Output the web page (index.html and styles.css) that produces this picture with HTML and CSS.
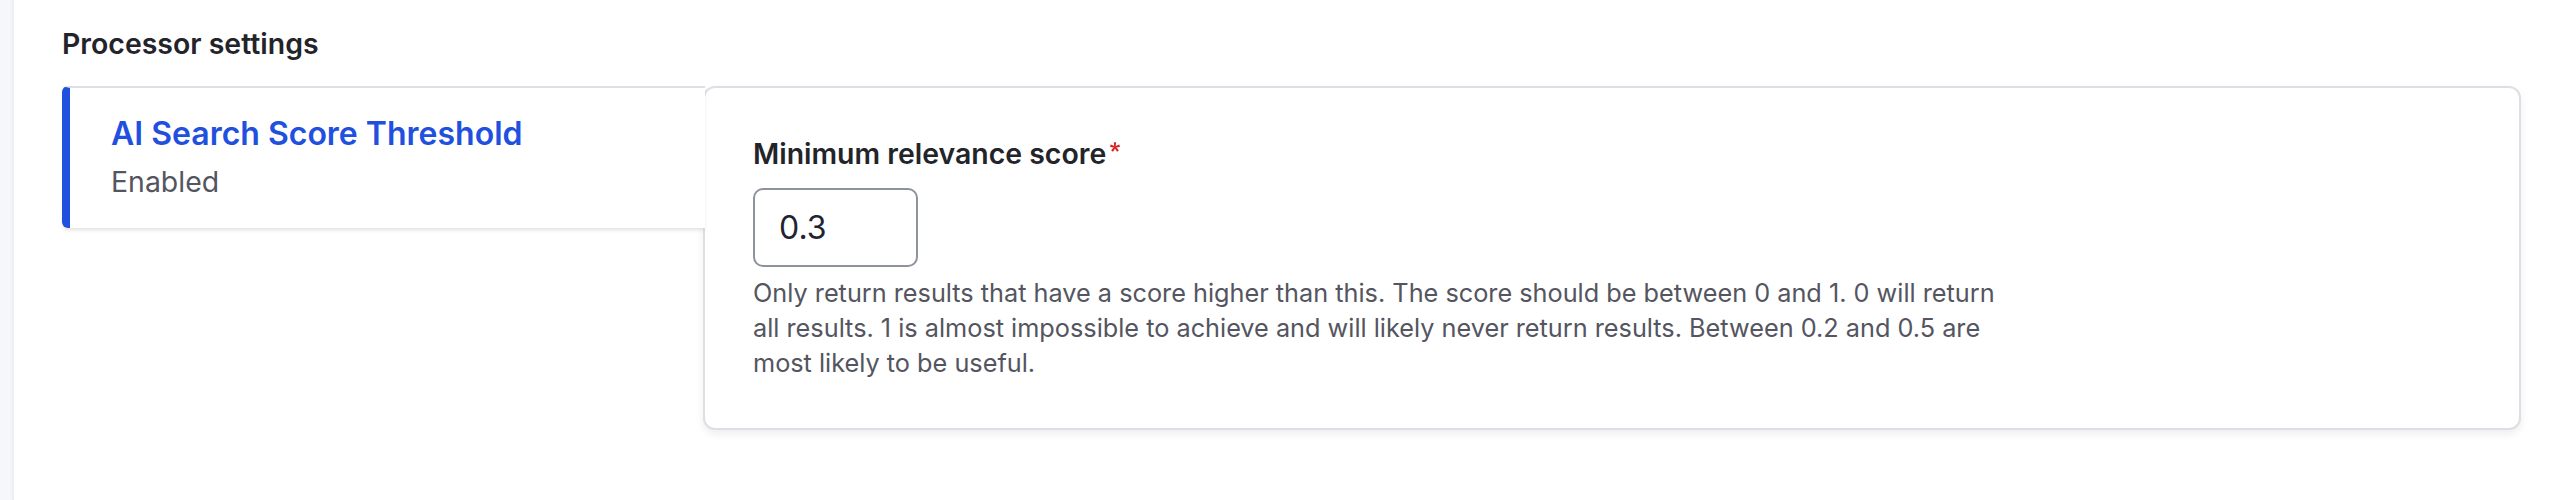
FILE: index.html
```html
<!DOCTYPE html>
<html lang="en">
<head>
<meta charset="utf-8">
<title>Processor settings</title>
<link rel="stylesheet" href="styles.css">
</head>
<body>
<div class="page">
  <aside class="strip"></aside>
  <main class="content">
    <div class="group-label">Processor settings</div>
    <div class="vtabs">
      <ul class="vtabs-menu">
        <li class="vtabs-item is-selected">
          <a class="vtabs-link" href="#">
            <span class="vtabs-title">AI Search Score Threshold</span>
            <span class="vtabs-summary">Enabled</span>
          </a>
        </li>
      </ul>
      <div class="vtabs-pane">
        <div class="form-item">
          <label class="form-label" for="score">Minimum relevance score<svg class="required" viewBox="0 0 16 16" aria-hidden="true"><path d="M0,7.562l1.114-3.438c2.565,0.906,4.43,1.688,5.59,2.35C6.398,3.553,6.237,1.544,6.22,0.447h3.511c-0.05,1.597-0.234,3.6-0.558,6.003c1.664-0.838,3.566-1.613,5.714-2.325L16,7.562c-2.05,0.678-4.06,1.131-6.028,1.356c0.984,0.856,2.372,2.381,4.166,4.575l-2.906,2.059c-0.935-1.274-2.041-3.009-3.316-5.206c-1.194,2.275-2.244,4.013-3.147,5.206l-2.856-2.059c1.872-2.307,3.211-3.832,4.017-4.575C3.849,8.516,1.896,8.062,0,7.562"/></svg></label>
          <input class="form-input" id="score" type="text" value="0.3">
          <div class="form-description">Only return results that have a score higher than this. The score should be between 0 and 1. 0 will return<br>all results. 1 is almost impossible to achieve and will likely never return results. Between 0.2 and 0.5 are<br>most likely to be useful.</div>
        </div>
      </div>
    </div>
  </main>
</div>
</body>
</html>
```
FILE: styles.css
```css
html, body {
  margin: 0;
  padding: 0;
  background: #ffffff;
}

body {
  font-family: Inter, "Noto Sans", "Liberation Sans", sans-serif;
  color: #232429;
}

.page {
  display: flex;
  min-height: 500px;
}

.strip {
  flex: 0 0 14px;
  background: linear-gradient(to right, #f6f7fb 0, #f6f7fb 10px, #ebebf0 14px);
}

.content {
  flex: 1;
  padding: 26px 41px 0 48px;
}

.group-label {
  font-size: 28.44px;
  line-height: 36px;
  font-weight: 600;
  color: #232429;
  margin-bottom: 24px;
}

.vtabs {
  display: flex;
  align-items: flex-start;
}

.vtabs-menu {
  flex: 0 0 643px;
  margin: 0;
  padding: 0;
  list-style: none;
  position: relative;
  z-index: 1;
}

.vtabs-item {
  background: #ffffff;
  border-top: 2px solid #dedfe4;
  border-left: 8px solid #2150de;
  border-radius: 6px 0 0 6px;
  box-shadow: 0 3px 4px -1px rgba(0, 0, 0, 0.12);
}

.vtabs-link {
  display: flex;
  flex-direction: column;
  padding: 24px 0 28px 41px;
  text-decoration: none;
}

.vtabs-title {
  font-size: 32px;
  line-height: 44px;
  font-weight: 600;
  color: #2150de;
}

.vtabs-summary {
  margin-top: 8px;
  font-size: 28.44px;
  line-height: 36px;
  color: #545560;
}

.vtabs-pane {
  flex: 1;
  margin-left: -2px;
  background: #ffffff;
  border: 2px solid #dedfe4;
  border-radius: 12px;
  box-shadow: 0 4px 8px rgba(0, 0, 0, 0.07);
  padding: 48px 48px 46px 48px;
}

.form-label {
  display: block;
  font-size: 28.44px;
  line-height: 36px;
  font-weight: 600;
  color: #232429;
  margin-bottom: 16px;
}

.required {
  display: inline-block;
  width: 10px;
  height: 10px;
  margin-left: 4px;
  margin-top: 6px;
  vertical-align: top;
  fill: #dc2323;
}

.form-input {
  display: block;
  box-sizing: border-box;
  width: 165px;
  height: 79px;
  margin: 0;
  padding: 0 24px;
  border: 2px solid #8e929c;
  border-radius: 10px;
  background: #ffffff;
  font-family: Inter, "Noto Sans", "Liberation Sans", sans-serif;
  font-size: 32px;
  color: #222330;
  outline: none;
}

.form-description {
  margin-top: 9px;
  font-size: 25.28px;
  line-height: 35.2px;
  color: #545560;
  white-space: nowrap;
}
```
